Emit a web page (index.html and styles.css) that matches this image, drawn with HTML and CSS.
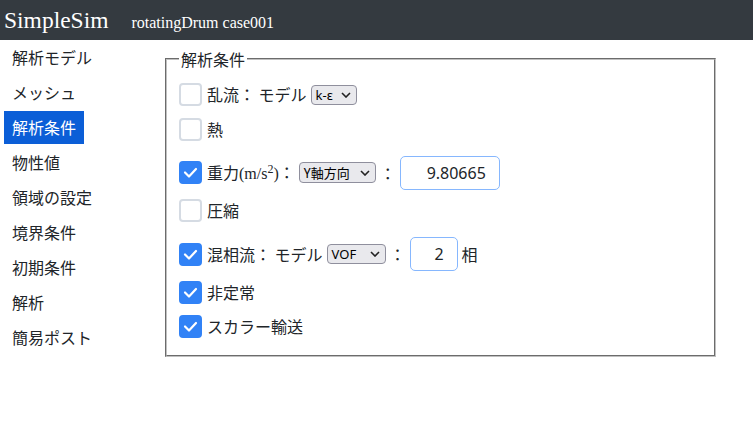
FILE: index.html
```html
<!DOCTYPE html>
<html lang="ja">
<head>
<meta charset="utf-8">
<title>SimpleSim</title>
<link rel="stylesheet" href="styles.css">
</head>
<body>
<header class="topbar">
  <span class="brand">SimpleSim</span>
  <span class="case">rotatingDrum case001</span>
</header>
<div class="main">
  <nav class="sidebar">
    <a class="nav-item">解析モデル</a>
    <a class="nav-item">メッシュ</a>
    <a class="nav-item active">解析条件</a>
    <a class="nav-item">物性値</a>
    <a class="nav-item">領域の設定</a>
    <a class="nav-item">境界条件</a>
    <a class="nav-item">初期条件</a>
    <a class="nav-item">解析</a>
    <a class="nav-item">簡易ポスト</a>
  </nav>
  <section class="content">
    <fieldset class="panel">
      <legend class="panel-title">解析条件</legend>
      <div class="opts">
        <div class="opt">
          <span class="cb"></span>
          <span class="lbl">乱流： モデル</span>
          <span class="sel sel-ke">k-ε<svg class="chev" width="10" height="6" viewBox="0 0 10 6"><path d="M1 1 L5 5 L9 1" fill="none" stroke="#222" stroke-width="1.6"/></svg></span>
        </div>
        <div class="opt">
          <span class="cb"></span>
          <span class="lbl">熱</span>
        </div>
        <div class="opt tall">
          <span class="cb on"><svg width="23" height="23" viewBox="0 0 23 23"><path d="M6 11.5 L10 15.5 L17 8" fill="none" stroke="#fff" stroke-width="2.2" stroke-linecap="round" stroke-linejoin="round"/></svg></span>
          <span class="lbl">重力<span class="unit">(m/s<sup>2</sup>)</span>：</span>
          <span class="sel sel-y">Y軸方向<svg class="chev" width="10" height="6" viewBox="0 0 10 6"><path d="M1 1 L5 5 L9 1" fill="none" stroke="#222" stroke-width="1.6"/></svg></span>
          <span class="colon">：</span>
          <span class="num num-g">9.80665</span>
        </div>
        <div class="opt">
          <span class="cb"></span>
          <span class="lbl">圧縮</span>
        </div>
        <div class="opt tall">
          <span class="cb on"><svg width="23" height="23" viewBox="0 0 23 23"><path d="M6 11.5 L10 15.5 L17 8" fill="none" stroke="#fff" stroke-width="2.2" stroke-linecap="round" stroke-linejoin="round"/></svg></span>
          <span class="lbl">混相流： モデル</span>
          <span class="sel sel-vof">VOF<svg class="chev" width="10" height="6" viewBox="0 0 10 6"><path d="M1 1 L5 5 L9 1" fill="none" stroke="#222" stroke-width="1.6"/></svg></span>
          <span class="colon">：</span>
          <span class="num num-p">2</span>
          <span class="unit-after">相</span>
        </div>
        <div class="opt">
          <span class="cb on"><svg width="23" height="23" viewBox="0 0 23 23"><path d="M6 11.5 L10 15.5 L17 8" fill="none" stroke="#fff" stroke-width="2.2" stroke-linecap="round" stroke-linejoin="round"/></svg></span>
          <span class="lbl">非定常</span>
        </div>
        <div class="opt last">
          <span class="cb on"><svg width="23" height="23" viewBox="0 0 23 23"><path d="M6 11.5 L10 15.5 L17 8" fill="none" stroke="#fff" stroke-width="2.2" stroke-linecap="round" stroke-linejoin="round"/></svg></span>
          <span class="lbl">スカラー輸送</span>
        </div>
      </div>
    </fieldset>
  </section>
</div>
</body>
</html>
```

FILE: styles.css
```css
* { box-sizing: border-box; }
html, body { margin: 0; padding: 0; background: #fff; }
body {
  font-family: "Noto Sans CJK JP", "Noto Sans", sans-serif;
  font-size: 16px;
  color: #212529;
}
.topbar {
  height: 40px;
  background: #343a40;
  color: #fff;
  display: flex;
  align-items: baseline;
  padding-left: 4px;
  font-family: "Liberation Serif", serif;
  line-height: 40px;
}
.brand { font-size: 23.5px; margin-right: 23px; }
.case { font-size: 16px; }

.main { display: flex; align-items: flex-start; }
.sidebar {
  flex: 0 0 165px;
  display: flex;
  flex-direction: column;
  align-items: flex-start;
  padding: 1px 0 0 4px;
}
.nav-item {
  display: block;
  padding: 7px 8px;
  line-height: 19px;
  margin-bottom: 2px;
  color: #212529;
}
.nav-item.active { background: #0b5ed7; color: #fff; }

.content { padding-top: 9px; }
.panel {
  width: 551px;
  margin: 0;
  padding: 14px 12px 17px;
  border: 2px groove #c0c0c0;
  min-width: 0;
}
.panel-title {
  padding: 0 2px;
  line-height: 20px;
  font-size: 16px;
}
.opts { display: flex; flex-direction: column; }
.opt {
  display: flex;
  align-items: center;
  height: 23px;
  margin-bottom: 11.5px;
}
.opt.tall { height: 34px; margin-top: 3.5px; margin-bottom: 9.5px; }
.opt.last { margin-bottom: 0; }

.cb {
  flex: 0 0 23px;
  width: 23px;
  height: 23px;
  border: 2px solid #d5dbe3;
  border-radius: 4px;
  background: #fff;
  position: relative;
}
.cb.on { background: #3182f6; border-color: #3182f6; }
.cb svg { position: absolute; left: -2px; top: -2px; }

.lbl { margin-left: 5px; line-height: 23px; white-space: nowrap; }
.unit { font-family: "Liberation Serif", serif; }
.unit sup { font-size: 12px; line-height: 0; }

.sel {
  display: inline-flex;
  align-items: center;
  justify-content: space-between;
  height: 20px;
  margin-left: 4px;
  padding: 0 5px 0 4px;
  border: 1px solid #8f8f9d;
  border-radius: 4px;
  background: #e9e9ed;
  font-family: "Noto Sans", "Noto Sans CJK JP", sans-serif;
  font-size: 13px;
  line-height: 18px;
  color: #000;
}
.sel-ke { width: 46px; }
.sel-y { width: 77px; height: 21px; font-family: "Noto Sans CJK JP", sans-serif; }
.sel-vof { width: 59px; }
.chev { flex: 0 0 10px; }

.colon { margin: 0 4px; }
.num {
  display: inline-flex;
  align-items: center;
  justify-content: flex-end;
  height: 34px;
  padding-right: 13px;
  border: 1px solid #86b7fe;
  border-radius: 5px;
  font-family: "Noto Sans", sans-serif;
  font-size: 16px;
  color: #212529;
  background: #fff;
}
.num-g { width: 100px; }
.num-p { width: 48px; }
.unit-after { margin-left: 4px; }
```
